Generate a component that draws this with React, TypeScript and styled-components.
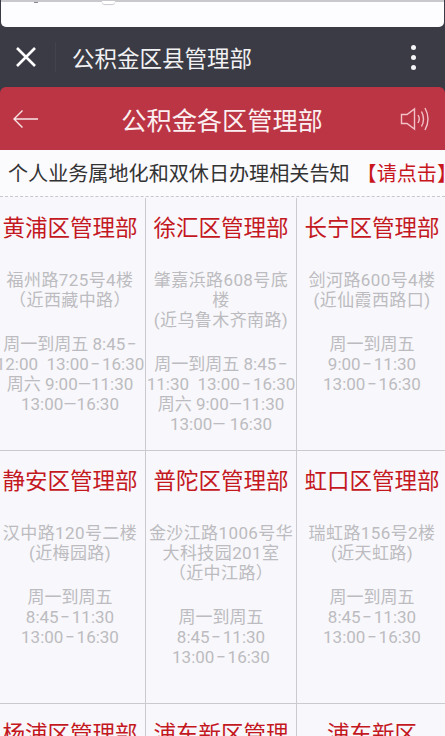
import React from "react";
import styled, { createGlobalStyle } from "styled-components";

interface officeprops {
  name: string;
  address: string[];
  hours: string[];
}

const offices: officeprops[] = [
  {
    name: "黄浦区管理部",
    address: ["福州路725号4楼", "（近西藏中路）"],
    hours: ["周一到周五 8:45\u200a−", "12:00  13:00\u200a−\u200a16:30", "周六 9:00—11:30", "13:00—16:30"],
  },
  {
    name: "徐汇区管理部",
    address: ["肇嘉浜路608号底", "楼", "(近乌鲁木齐南路)"],
    hours: ["周一到周五 8:45\u200a−", "11:30  13:00\u200a−\u200a16:30", "周六 9:00—11:30", "13:00— 16:30"],
  },
  {
    name: "长宁区管理部",
    address: ["剑河路600号4楼", "(近仙霞西路口)"],
    hours: ["周一到周五", "9:00\u200a−\u200a11:30", "13:00\u200a−\u200a16:30"],
  },
  {
    name: "静安区管理部",
    address: ["汉中路120号二楼", "(近梅园路)"],
    hours: ["周一到周五", "8:45\u200a−\u200a11:30", "13:00\u200a−\u200a16:30"],
  },
  {
    name: "普陀区管理部",
    address: ["金沙江路1006号华", "大科技园201室", "（近中江路）"],
    hours: ["周一到周五", "8:45\u200a−\u200a11:30", "13:00\u200a−\u200a16:30"],
  },
  {
    name: "虹口区管理部",
    address: ["瑞虹路156号2楼", "(近天虹路)"],
    hours: ["周一到周五", "8:45\u200a−\u200a11:30", "13:00\u200a−\u200a16:30"],
  },
  { name: "杨浦区管理部", address: [], hours: [] },
  { name: "浦东新区管理", address: [], hours: [] },
  { name: "浦东新区", address: [], hours: [] },
];

const App: React.FC = () => {
  return (
    <SPage>
      <GlobalStyle />
      <SPeekCard>
        <SPeekDot />
        <SPeekKnob />
      </SPeekCard>
      <SWebBar>
        <svg width="22" height="22" viewBox="0 0 22 22">
          <path d="M2 2 L20 20 M20 2 L2 20" stroke="#fff" strokeWidth="2.6" fill="none" />
        </svg>
        <SWebBarDivider />
        <SWebBarTitle>公积金区县管理部</SWebBarTitle>
        <SMenuDots>
          <SDot />
          <SDot />
          <SDot />
        </SMenuDots>
      </SWebBar>
      <SHeader>
        <svg width="32" height="20" viewBox="0 0 32 20">
          <path d="M26 10 H2 M10.5 1.5 L2 10 L10.5 18.5" stroke="#f6e6e8" strokeWidth="1.4" fill="none" />
        </svg>
        <SHeaderTitle>公积金各区管理部</SHeaderTitle>
        <svg width="30" height="26" viewBox="0 0 30 26">
          <path
            d="M1.5 8.5 H7 L14.5 3 V23 L7 17.5 H1.5 Z"
            stroke="#f2c2c8"
            strokeWidth="1.4"
            fill="none"
          />
          <path
            d="M18 9 Q20.5 13 18 17 M21.5 5.5 Q25.5 13 21.5 20.5 M25 2 Q31 13 25 24"
            stroke="#f2c2c8"
            strokeWidth="1.4"
            fill="none"
          />
        </svg>
      </SHeader>
      <SNotice>
        个人业务属地化和双休日办理相关告知<SNoticeLink>【请点击】</SNoticeLink>
      </SNotice>
      <SGrid>
        {offices.map((office) => (
          <SCell key={office.name}>
            <SCellName>{office.name}</SCellName>
            {office.address.length > 0 && (
              <SCellText $spacing={0.4}>
                {office.address.map((line) => (
                  <SLine key={line}>{line}</SLine>
                ))}
              </SCellText>
            )}
            {office.hours.length > 0 && (
              <SCellText $spacing={0}>
                {office.hours.map((line) => (
                  <SLine key={line}>{line}</SLine>
                ))}
              </SCellText>
            )}
          </SCell>
        ))}
      </SGrid>
    </SPage>
  );
};

const GlobalStyle = createGlobalStyle`
  html, body {
    margin: 0;
    padding: 0;
    height: 100%;
    overflow: hidden;
    background: #f8f7fb;
  }
`;

const SPage = styled.div`
  width: 445px;
  height: 736px;
  overflow: hidden;
  background: #3a3b44;
  font-family: Roboto, "Noto Sans CJK SC", sans-serif;
`;

const SPeekCard = styled.div`
  position: relative;
  height: 25px;
  background: #fdfcfe;
  border-top: 2px solid #c9c8cc;
  border-radius: 0 0 5px 5px;
  margin: 0 1px;
`;

const SPeekDot = styled.span`
  position: absolute;
  left: 33px;
  top: 0;
  width: 4px;
  height: 1px;
  background: #8a8a8e;
`;

const SPeekKnob = styled.span`
  position: absolute;
  left: 101px;
  top: -1px;
  width: 13px;
  height: 3px;
  background: #fff;
  border-radius: 0 0 7px 7px;
  box-shadow: 0 1px 1px #c9c8cc;
`;

const SWebBar = styled.div`
  height: 60px;
  display: flex;
  align-items: center;
  padding: 0 29px 0 15px;
`;

const SWebBarDivider = styled.div`
  width: 1px;
  height: 30px;
  background: #42434c;
  margin: 0 16px 0 18px;
`;

const SWebBarTitle = styled.div`
  flex: 1;
  color: #f2f2f4;
  font-size: 22.5px;
  white-space: nowrap;
`;

const SMenuDots = styled.div`
  display: flex;
  flex-direction: column;
  gap: 5px;
`;

const SDot = styled.span`
  width: 5px;
  height: 5px;
  border-radius: 50%;
  background: #f4f4f6;
`;

const SHeader = styled.div`
  height: 63px;
  box-sizing: border-box;
  display: flex;
  align-items: center;
  justify-content: space-between;
  padding: 0 15px 0 12px;
  background: #bc3545;
  border-radius: 6px 6px 0 0;
`;

const SHeaderTitle = styled.div`
  color: #fbf0f1;
  font-size: 25.2px;
  white-space: nowrap;
`;

const SNotice = styled.div`
  height: 47px;
  box-sizing: border-box;
  padding: 0 0 2px 8px;
  display: flex;
  align-items: center;
  background: #fbfafd;
  border-bottom: 1px dashed #c8c8cc;
  color: #333;
  font-size: 20.1px;
  white-space: nowrap;
  overflow: hidden;
`;

const SNoticeLink = styled.span`
  color: #c8161d;
  margin-left: 7px;
`;

const SGrid = styled.div`
  display: grid;
  grid-template-columns: repeat(3, 151px);
  grid-auto-rows: 253px;
  margin-left: -5px;
  padding-top: 1px;
  background: #f8f7fb;
`;

const SCell = styled.div`
  min-width: 0;
  display: flex;
  flex-direction: column;
  align-items: center;
  gap: 24px;
  padding-top: 15px;
  box-sizing: border-box;
  border-right: 1px solid #cbcbcf;
  border-bottom: 1px solid #cbcbcf;
  overflow: visible;
`;

const SCellName = styled.div`
  color: #c4181f;
  font-size: 22.5px;
  line-height: 30px;
  white-space: nowrap;
  margin-bottom: 3px;
`;

const SCellText = styled.div<{ $spacing: number }>`
  color: #bcbcc0;
  font-size: 17px;
  letter-spacing: ${(props) => props.$spacing}px;
  line-height: 20px;
  text-align: center;
`;

const SLine = styled.div`
  white-space: pre;
`;

export default App;
